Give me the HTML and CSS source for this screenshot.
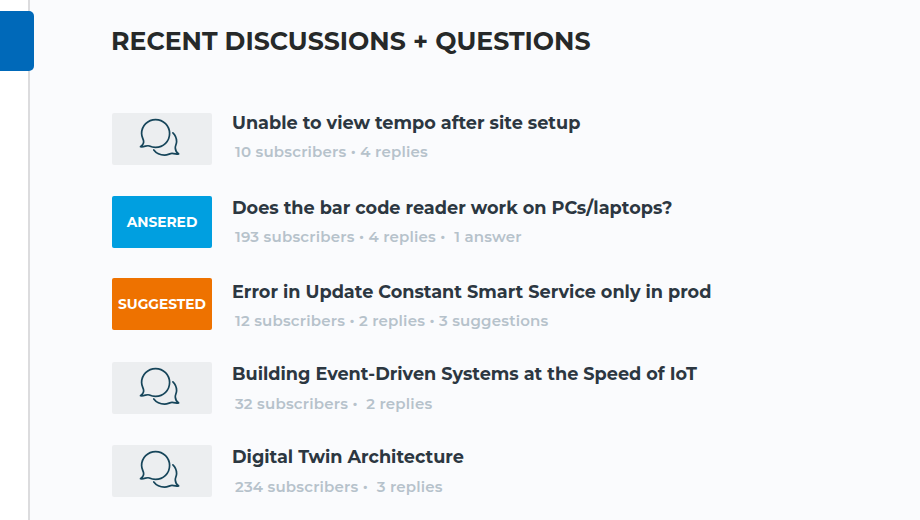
FILE: index.html
```html
<!DOCTYPE html>
<html lang="en">
<head>
    <meta charset="UTF-8">
    <meta name="viewport" content="width=device-width, initial-scale=1.0">
    <title>Recent Discussions</title>
    <link rel="stylesheet" href="styles.css">
</head>
<body>
    <svg class="sprite" aria-hidden="true">
        <symbol id="chat" viewBox="0.4 0.2 100 52">
            <path d="M44 6.8 C51.8 6.8 58 13 58 20.8 C58 28.6 51.8 34.6 44 34.6 C41.5 34.6 39.4 34 37.8 33.2 C35 32.1 33 34.5 28.9 33.9 C30.8 32.5 32.6 30.3 31.9 27.7 C31.2 25.3 30 23.6 30 20.8 C30 13 36.2 6.8 44 6.8 Z"/>
            <path d="M61.3 20 C63.7 22.3 65 25.3 65 28.6 C65 31.8 63.4 32.7 63.7 35.3 C63.9 37.9 65.3 40.1 67.1 41.1 C64.4 41.8 62 40.7 60.5 40.6 C58.3 40.5 56.4 42.3 53 42.3 C48.4 42.3 44.5 40.3 42.2 37.2"/>
        </symbol>
    </svg>

    <aside class="sidebar">
        <div class="sidebar-tab"></div>
    </aside>

    <main>
        <h1>RECENT DISCUSSIONS + QUESTIONS</h1>

        <ul class="discussions">
            <li class="discussion">
                <div class="status"><svg><use href="#chat"/></svg></div>
                <div class="info">
                    <h2>Unable to view tempo after site setup</h2>
                    <p>10 subscribers • 4 replies</p>
                </div>
            </li>
            <li class="discussion reader">
                <div class="status answered">ANSERED</div>
                <div class="info">
                    <h2>Does the bar code reader work on PCs/laptops?</h2>
                    <p>193 subscribers • 4 replies •&nbsp; 1 answer</p>
                </div>
            </li>
            <li class="discussion service">
                <div class="status suggested">SUGGESTED</div>
                <div class="info">
                    <h2>Error in Update Constant Smart Service only in prod</h2>
                    <p>12 subscribers • 2 replies • 3 suggestions</p>
                </div>
            </li>
            <li class="discussion events">
                <div class="status"><svg><use href="#chat"/></svg></div>
                <div class="info">
                    <h2>Building Event-Driven Systems at the Speed of IoT</h2>
                    <p>32 subscribers •&nbsp; 2 replies</p>
                </div>
            </li>
            <li class="discussion twin">
                <div class="status"><svg><use href="#chat"/></svg></div>
                <div class="info">
                    <h2>Digital Twin Architecture</h2>
                    <p>234 subscribers •&nbsp; 3 replies</p>
                </div>
            </li>
        </ul>
    </main>
</body>
</html>
```

FILE: styles.css
```css
* {
    box-sizing: border-box;
}

body {
    display: flex;
    height: 520px;
    margin: 0;
    overflow: hidden;
    background-color: #fafbfd;
    font-family: Montserrat, Inter, sans-serif;
}

h1, h2, p, ul {
    margin: 0;
    padding: 0;
    white-space: nowrap;
}

.sprite {
    display: none;
}

.sidebar {
    flex: none;
    width: 30px;
    padding-top: 11px;
    background-color: #fff;
    border-right: 2px solid #dcdcde;
}

.sidebar-tab {
    width: 34px;
    height: 60px;
    background-color: #0069b9;
    border-radius: 0 5px 5px 0;
}

main {
    padding: 26px 0 0 82px;
}

h1 {
    height: 87px;
    margin-left: -1px;
    color: #262929;
    font-size: 25.2px;
    font-weight: 700;
    line-height: 30px;
}

.discussions {
    list-style: none;
}

.discussion {
    display: flex;
    gap: 20px;
    height: 83px;
}

.status {
    display: flex;
    align-items: center;
    justify-content: center;
    width: 100px;
    height: 52px;
    border-radius: 2px;
    background-color: #eceef0;
    color: #fff;
    font-size: 13.8px;
    font-weight: 700;
}

.status svg {
    width: 100px;
    height: 52px;
    fill: none;
    stroke: #16455a;
    stroke-width: 1.7;
    stroke-linecap: round;
    stroke-linejoin: round;
}

.answered {
    background-color: #009fe0;
}

.suggested {
    background-color: #ee7200;
}

.info h2 {
    color: #2c3741;
    font-size: 17.67px;
    font-weight: 700;
    line-height: 20px;
}

.info p {
    padding: 9px 0 0 3px;
    color: #b6c2cb;
    font-size: 15px;
    font-weight: 600;
    line-height: 20px;
    letter-spacing: 0.19px;
}

.reader {
    height: 82px;
}

.service {
    height: 84px;
}

.reader .info {
    padding-top: 2px;
}

.service .info {
    padding-top: 4px;
}

.events .info,
.twin .info {
    padding-top: 2px;
}

.events p,
.twin p {
    padding-top: 10px;
}
```
